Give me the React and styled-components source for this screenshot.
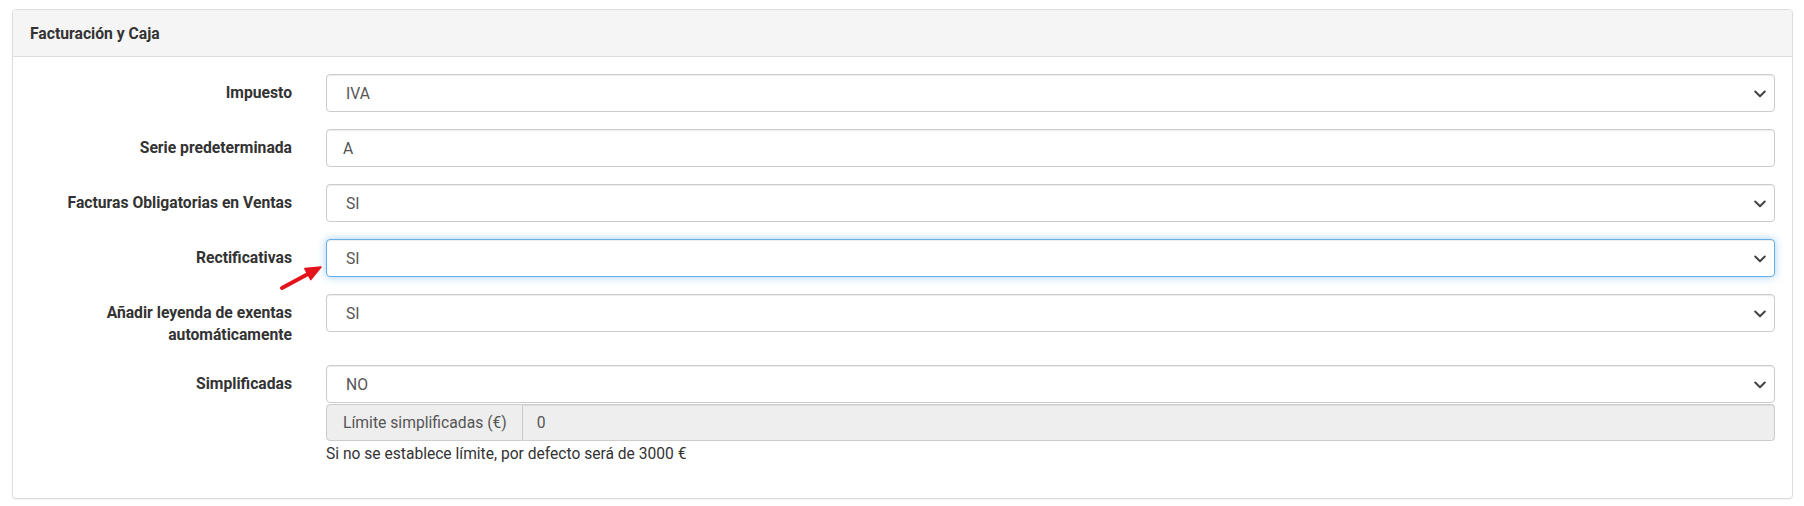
import React from "react";
import styled, { createGlobalStyle, css } from "styled-components";

const Global = createGlobalStyle`
  html, body { margin: 0; padding: 0; background: #fff; }
  body { font-family: Roboto, "Liberation Sans", Arial, sans-serif; font-size: 14px; color: #333; }
  * { box-sizing: border-box; }
`;

const Page = styled.div`
  padding: 9px 11px 9px 12px;
`;

const Panel = styled.section`
  border: 1px solid #ddd;
  border-radius: 4px;
  background: #fff;
  box-shadow: 0 1px 1px rgba(0, 0, 0, 0.05);
`;

const PanelHeader = styled.header`
  height: 47px;
  display: flex;
  align-items: center;
  padding: 0 17px;
  background: #f5f5f5;
  border-bottom: 1px solid #ddd;
  border-radius: 3px 3px 0 0;
  font-weight: 700;
  font-size: 15.7px;
  color: #333;
`;

const PanelBody = styled.div`
  position: relative;
  padding: 17px 17px 17px 0;
`;

const Row = styled.div`
  display: grid;
  grid-template-columns: 313px 1fr;
  align-items: start;
  margin-bottom: 17px;
`;

const Label = styled.label`
  display: block;
  text-align: right;
  padding: 8px 34px 2px 0;
  line-height: 22px;
  font-weight: 700;
  font-size: 15.7px;
  color: #333;
`;

const Field = styled.div`
  display: flex;
  flex-direction: column;
`;

const SelectWrap = styled.div`
  position: relative;
`;

const controlBase = css`
  width: 100%;
  height: 38px;
  border: 1px solid #ccc;
  border-radius: 4px;
  background: #fff;
  font-family: Roboto, "Liberation Sans", Arial, sans-serif;
  font-size: 15.7px;
  color: #555;
  outline: none;
  box-shadow: inset 0 1px 1px rgba(0, 0, 0, 0.075);
  ${(p) =>
    p.$focused &&
    css`
      border-color: #66afe9;
      box-shadow: inset 0 1px 1px rgba(0, 0, 0, 0.075), 0 0 8px rgba(102, 175, 233, 0.6);
    `}
`;

const Select = styled.select`
  ${controlBase}
  appearance: none;
  -webkit-appearance: none;
  padding: 0 30px 0 19px;
`;

const TextInput = styled.input`
  ${controlBase}
  padding: 0 16px;
`;

const Chevron = styled.svg`
  position: absolute;
  right: 9px;
  top: 16px;
  pointer-events: none;
`;

const InputGroup = styled.div`
  display: flex;
  height: 37px;
  margin-top: 1px;
`;

const Addon = styled.span`
  display: flex;
  align-items: center;
  padding: 0 15px 0 16px;
  background: #eee;
  border: 1px solid #ccc;
  border-radius: 4px 0 0 4px;
  color: #555;
  font-size: 15.7px;
  white-space: nowrap;
`;

const GroupInput = styled.input`
  flex: 1;
  height: 37px;
  border: 1px solid #ccc;
  border-left: none;
  border-radius: 0 4px 4px 0;
  background: #eee;
  padding: 0 14px;
  font-family: Roboto, "Liberation Sans", Arial, sans-serif;
  font-size: 15.7px;
  color: #555;
  outline: none;
  box-shadow: inset 0 1px 1px rgba(0, 0, 0, 0.075);
`;

const Help = styled.p`
  margin: 3px 0 0;
  line-height: 20px;
  font-size: 15.6px;
  color: #333;
`;

const Annotation = styled.svg`
  position: absolute;
  left: 264px;
  top: 205px;
  pointer-events: none;
`;

function SelectField({ value, focused }) {
  return (
    <SelectWrap>
      <Select $focused={focused} defaultValue={value}>
        <option value={value}>{value}</option>
      </Select>
      <Chevron width="12" height="8" viewBox="0 0 12 8">
        <path d="M1.2 1.5 L6 6.2 L10.8 1.5" fill="none" stroke="#444" strokeWidth="2" strokeLinecap="round" strokeLinejoin="round" />
      </Chevron>
    </SelectWrap>
  );
}

export default function App() {
  return (
    <>
      <Global />
      <Page>
        <Panel>
          <PanelHeader>Facturación y Caja</PanelHeader>
          <PanelBody>
            <Row>
              <Label>Impuesto</Label>
              <SelectField value="IVA" />
            </Row>
            <Row>
              <Label>Serie predeterminada</Label>
              <TextInput defaultValue="A" />
            </Row>
            <Row>
              <Label>Facturas Obligatorias en Ventas</Label>
              <SelectField value="SI" />
            </Row>
            <Row>
              <Label>Rectificativas</Label>
              <SelectField value="SI" focused />
            </Row>
            <Row>
              <Label>
                Añadir leyenda de exentas
                <br />
                automáticamente
              </Label>
              <SelectField value="SI" />
            </Row>
            <Row>
              <Label>Simplificadas</Label>
              <Field>
                <SelectField value="NO" />
                <InputGroup>
                  <Addon>Límite simplificadas (€)</Addon>
                  <GroupInput defaultValue="0" readOnly />
                </InputGroup>
                <Help>Si no se establece límite, por defecto será de 3000 €</Help>
              </Field>
            </Row>
            <Annotation width="50" height="32" viewBox="0 0 50 32">
              <path d="M5 26 L31 12" stroke="#e3121b" strokeWidth="4" strokeLinecap="round" fill="none" />
              <path d="M44 5 L33.8 17.6 L27.8 6.6 Z" fill="#e3121b" stroke="#e3121b" strokeWidth="1.5" strokeLinejoin="round" />
            </Annotation>
          </PanelBody>
        </Panel>
      </Page>
    </>
  );
}
